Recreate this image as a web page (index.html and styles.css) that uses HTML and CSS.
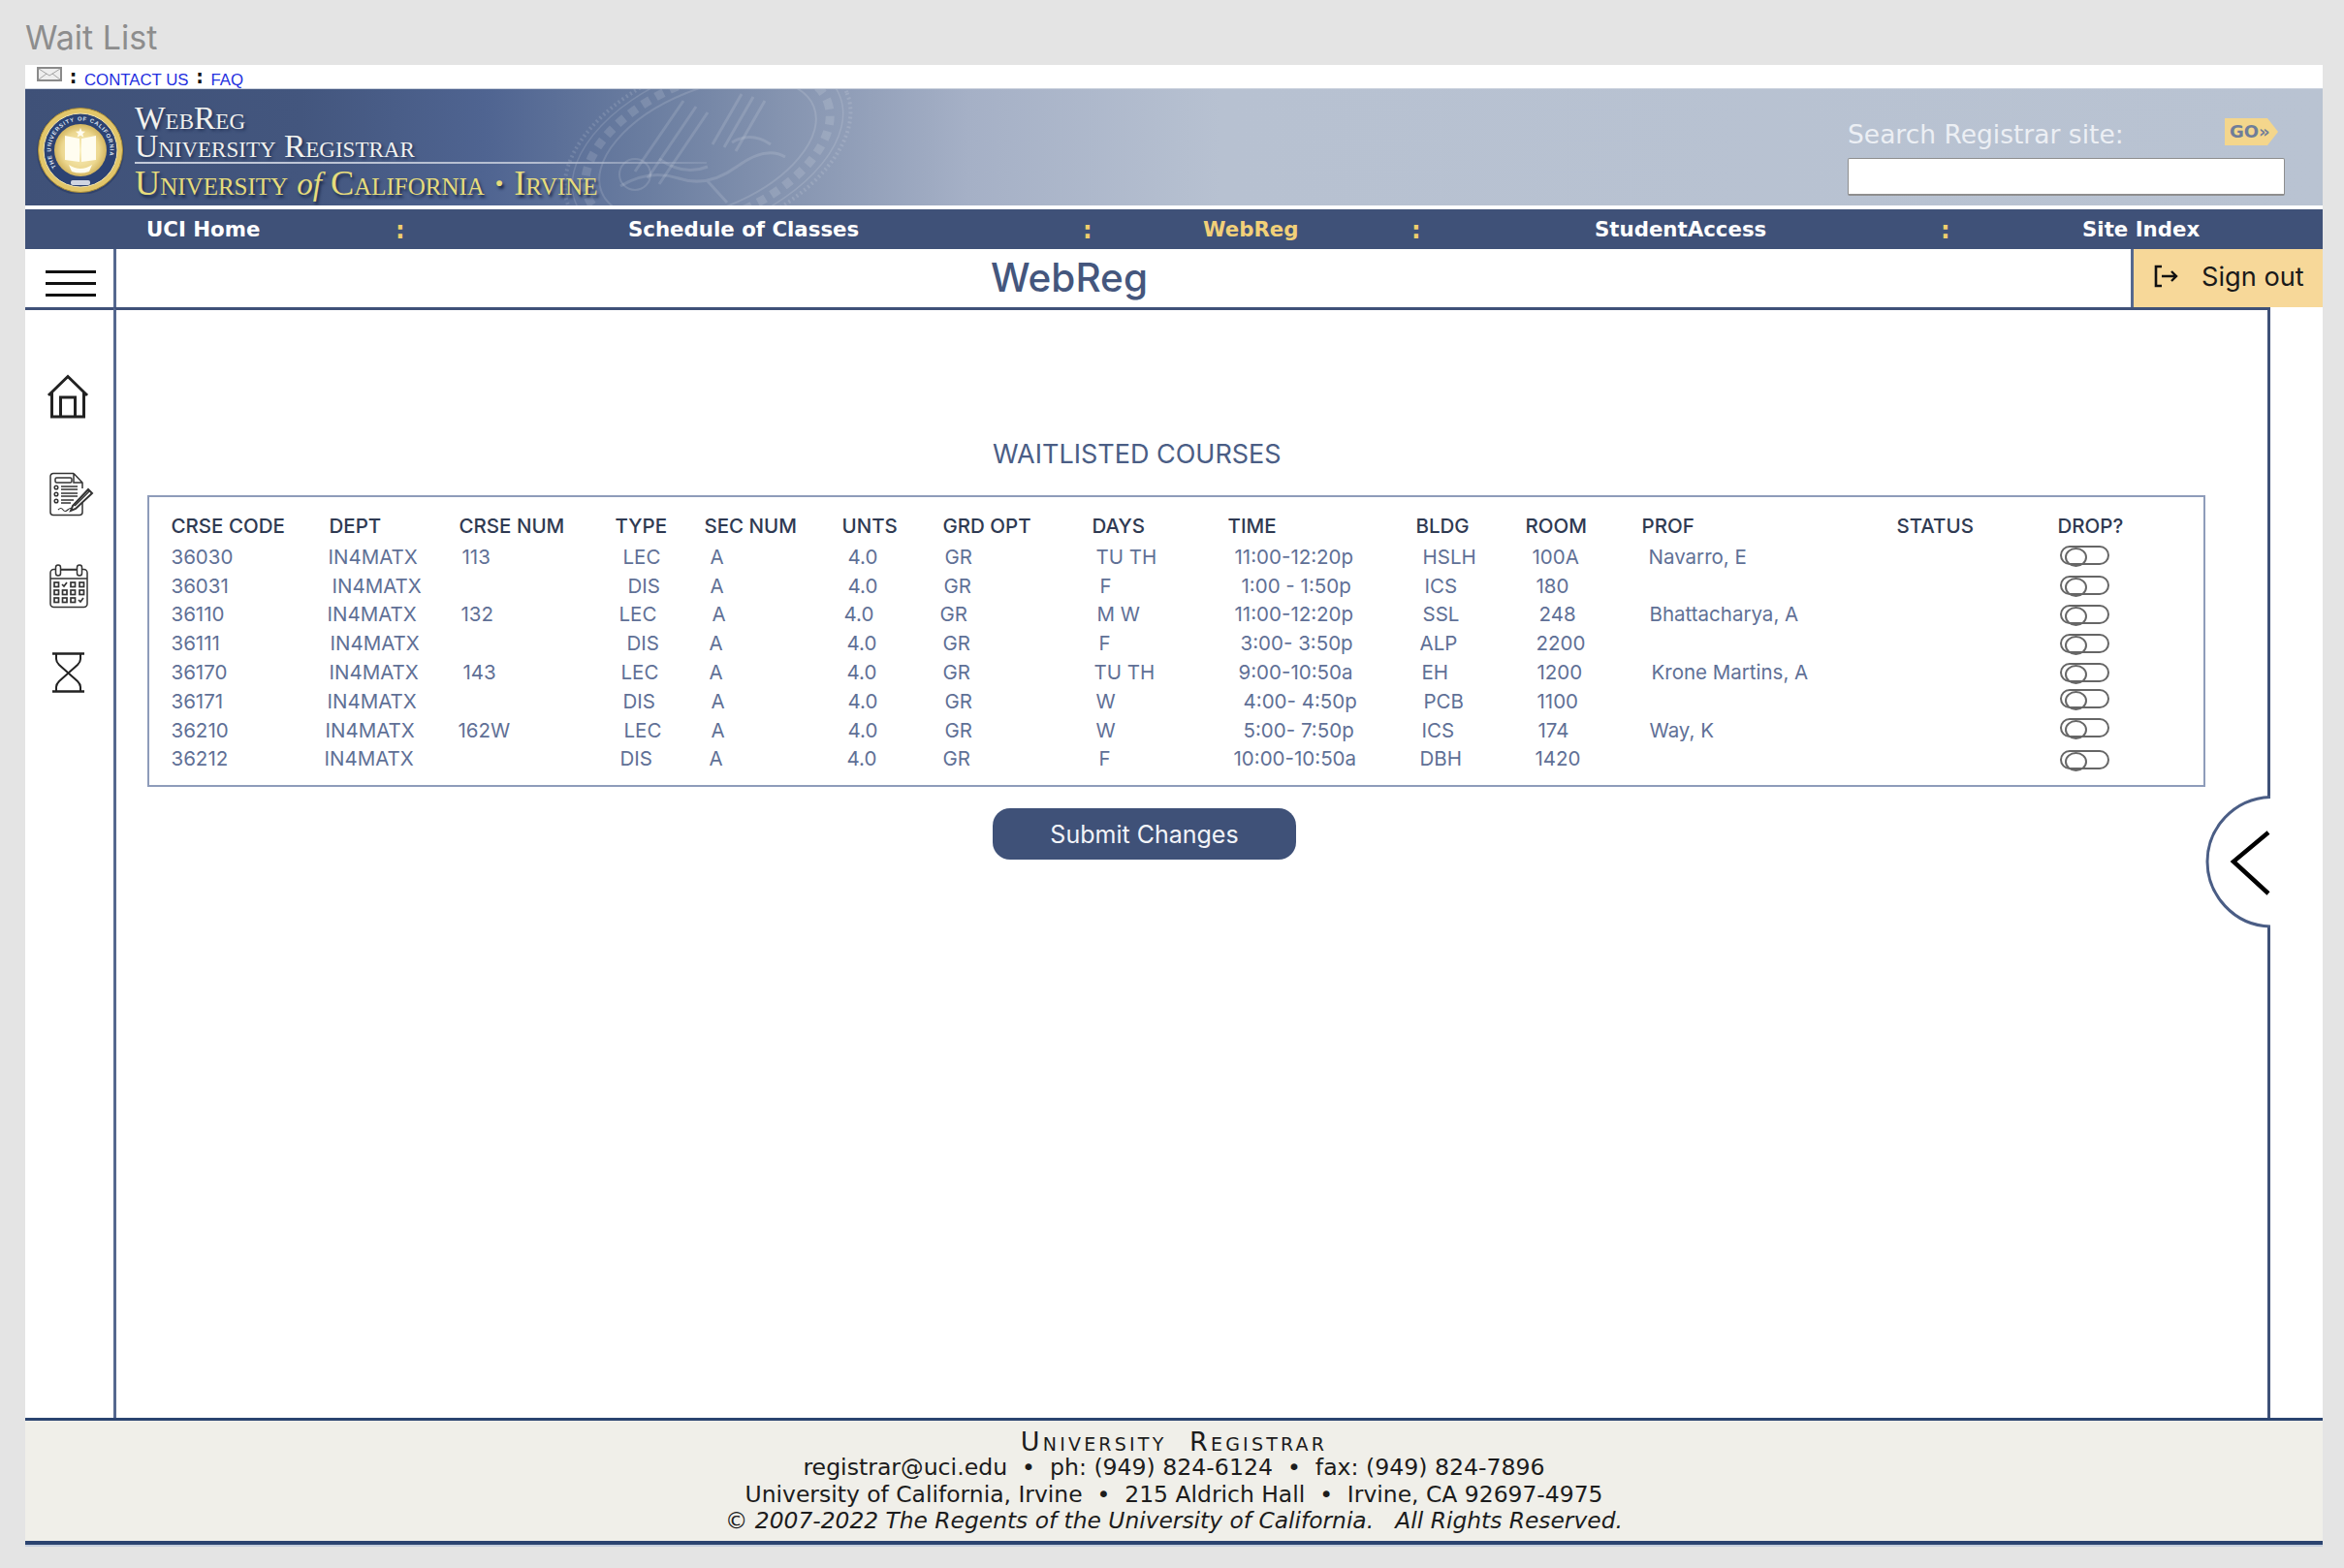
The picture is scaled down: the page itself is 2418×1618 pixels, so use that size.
FILE: index.html
```html
<!DOCTYPE html>
<html lang="en">
<head>
<meta charset="utf-8">
<title>Wait List</title>
<link rel="stylesheet" href="styles.css">
</head>
<body>
<h1 class="page-title">Wait List</h1>
<div class="app">
  <div class="topbar">
    <svg class="mail" viewBox="0 0 26 15"><rect x="1" y="1" width="24" height="13" fill="#eee" stroke="#8a8a8a" stroke-width="2"/><path d="M2 2l11 7 11-7M2 13l8-6M24 13l-8-6" fill="none" stroke="#a5a5a5"/></svg>
    <span class="sep">:</span><a class="toplink" href="#">CONTACT US</a><span class="sep">:</span><a class="toplink" href="#">FAQ</a>
  </div>

  <header class="banner">
    <svg class="watermark" viewBox="0 0 300 120">
      <g fill="none" stroke="#fff" stroke-opacity=".13">
        <g transform="rotate(-22 150 62)">
          <ellipse cx="150" cy="62" rx="155" ry="88" stroke-width="4" stroke-dasharray="2 3"/>
          <ellipse cx="150" cy="62" rx="147" ry="82" stroke-width="1.500"/>
          <ellipse cx="150" cy="62" rx="118" ry="62" stroke-width="2"/>
          <ellipse cx="150" cy="62" rx="133" ry="72" stroke-width="9" stroke-dasharray="9 7"/>
        </g>
        <g stroke-width="3">
          <path d="M75 85L125 12M88 92L138 18M100 98L150 24"/>
          <path d="M185 5l-30 52M197 8l-30 52M209 12l-30 52"/>
          <path d="M60 100q30-18 60-8t60-12 50-10M100 72q25 18 50 8M175 55q20-12 40 2M150 95l20 22"/>
        </g>
        <circle cx="75" cy="88" r="16" stroke-width="2"/>
      </g>
    </svg>
    <svg class="seal" viewBox="0 0 90 90">
      <defs>
        <radialGradient id="gold" cx=".5" cy=".5" r=".55"><stop offset="0" stop-color="#fbf2c6"/><stop offset=".65" stop-color="#ecd78f"/><stop offset="1" stop-color="#c9a94f"/></radialGradient>
        <path id="ringtext" d="M20 62.500A30.500 30.500 0 1 1 70 62.500"/>
        <filter id="soft"><feGaussianBlur stdDeviation=".6"/></filter>
      </defs>
      <circle cx="45" cy="46" r="45" fill="#23345c" opacity=".5"/>
      <circle cx="45" cy="45" r="43.500" fill="#e2c66a" stroke="#a98b37"/>
      <circle cx="45" cy="45" r="38" fill="#2c4273" stroke="#f1e4ae"/>
      <circle cx="45" cy="45" r="27" fill="url(#gold)"/>
      <text class="seal-text"><textPath href="#ringtext">THE UNIVERSITY OF CALIFORNIA</textPath></text>
      <g filter="url(#soft)" fill="#fffdf0">
        <path d="M29 30l15 3v24l-15-2zM61 30l-15 3v24l15-2z"/>
        <path d="M45 22l1.500 3.500 3.500.3-2.700 2.300.9 3.400-3.200-1.800-3.200 1.800.9-3.400-2.700-2.300 3.500-.3z"/>
        <path d="M33 60q12 8 24 0l-3 7q-9 3-18 0z"/>
      </g>
      <rect x="35" y="76" width="20" height="5" rx="2" fill="#cfd5e2"/>
    </svg>
    <div class="wordmark">
      <div class="wm-line">WebReg</div>
      <div class="wm-line">University Registrar</div>
      <div class="wm-rule"></div>
      <div class="wm-uni">University <i>of</i> California <span class="wm-dot">·</span> Irvine</div>
    </div>
    <form class="search">
      <div class="search-head">
        <label class="search-label" for="q">Search Registrar site:</label>
        <span class="go">GO»</span>
      </div>
      <input id="q" class="search-input" type="text">
    </form>
  </header>

  <nav class="nav">
    <a href="#" class="nav-link">UCI Home</a><span class="nav-sep">:</span>
    <a href="#" class="nav-link">Schedule of Classes</a><span class="nav-sep">:</span>
    <a href="#" class="nav-link nav-active">WebReg</a><span class="nav-sep">:</span>
    <a href="#" class="nav-link">StudentAccess</a><span class="nav-sep">:</span>
    <a href="#" class="nav-link">Site Index</a>
  </nav>

  <div class="titlebar">
    <div class="burger"><span></span><span></span><span></span></div>
    <div class="app-title">WebReg</div>
    <a href="#" class="signout">
      <svg class="signout-icon" viewBox="0 0 26 24"><path d="M8 2H2v20h6" fill="none" stroke="#111" stroke-width="2.600"/><path d="M8 12h15M18 7l5 5-5 5" fill="none" stroke="#111" stroke-width="2.400"/></svg>
      <span>Sign out</span>
    </a>
  </div>

  <div class="body">
    <aside class="sidebar">
      <svg class="ic ic-home" viewBox="0 0 44 46" fill="none" stroke="#222" stroke-width="3">
        <path d="M2 22L22 2.500 42 22"/><path d="M5.500 19v25h33V19"/><path d="M14.500 44V24h15v20"/>
      </svg>
      <svg class="ic ic-doc" viewBox="0 0 46 46" fill="none" stroke="#333" stroke-width="1.500">
        <path d="M25 1.500H4a3 3 0 0 0-3 3v37a3 3 0 0 0 3 3h27a3 3 0 0 0 3-3V32"/><path d="M25 1.500L34 11v6M25 1.500V11h9"/>
        <rect x="6" y="6" width="17" height="5" rx="1.500"/>
        <circle cx="7" cy="16" r="1.800"/><circle cx="7" cy="23" r="1.800"/><circle cx="7" cy="30" r="1.800"/>
        <path d="M12 15h17M12 18h17M12 22h17M12 25h17M12 29h13M12 32h10" stroke-width="1.300"/>
        <path d="M9 39q3-3 5 0t5 0 5 0" stroke-width="1.200"/>
        <path d="M24 35l16-17 4 4-17 16-5 2z" stroke-width="2" fill="#fff"/>
        <path d="M26 35l15-15" stroke-width="1.500"/>
      </svg>
      <svg class="ic ic-cal" viewBox="0 0 40 46" fill="none" stroke="#333" stroke-width="1.500">
        <rect x="1" y="5.500" width="38" height="39" rx="3.500"/>
        <path d="M12 6h16M1 15h38" stroke-width="1.500"/>
        <rect x="6.500" y="1" width="5" height="11" rx="2.500" fill="#fff"/><rect x="28.500" y="1" width="5" height="11" rx="2.500" fill="#fff"/>
        <g stroke-width="1.700">
          <rect x="5" y="19" width="4.500" height="4.500"/><path d="M13 21l2 2 3-4"/><rect x="22" y="19" width="4.500" height="4.500"/><rect x="31" y="19" width="4.500" height="4.500"/>
          <rect x="5" y="27" width="4.500" height="4.500"/><rect x="13.500" y="27" width="4.500" height="4.500"/><rect x="22" y="27" width="4.500" height="4.500"/><rect x="31" y="27" width="4.500" height="4.500"/>
          <rect x="5" y="35" width="4.500" height="4.500"/><rect x="13.500" y="35" width="4.500" height="4.500"/><rect x="22" y="35" width="4.500" height="4.500"/><path d="M30 37l2 2 3-4"/>
        </g>
      </svg>
      <svg class="ic ic-hour" viewBox="0 0 33 42" fill="none" stroke="#222" stroke-width="2">
        <path d="M0 1.500h33M0 40.500h33" stroke-width="2.600"/>
        <path d="M4 2v5q0 3 3 6l19 17q3 3 3 6v4"/><path d="M29 2v5q0 3-3 6L7 30q-3 3-3 6v4"/>
      </svg>
    </aside>

    <main class="main">
      <h2 class="section-title">WAITLISTED COURSES</h2>
      <div class="course-box">
        <div class="row head">
          <div>CRSE CODE</div><div>DEPT</div><div>CRSE NUM</div><div>TYPE</div><div>SEC NUM</div><div>UNTS</div><div>GRD OPT</div><div>DAYS</div><div>TIME</div><div>BLDG</div><div>ROOM</div><div>PROF</div><div>STATUS</div><div>DROP?</div>
        </div>
        <div class="row r1"><div>36030</div><div>IN4MATX</div><div>113</div><div>LEC</div><div>A</div><div>4.0</div><div>GR</div><div>TU TH</div><div>11:00-12:20p</div><div>HSLH</div><div>100A</div><div>Navarro, E</div><div></div><label class="toggle"><input type="checkbox"></label></div>
        <div class="row r2"><div>36031</div><div>IN4MATX</div><div></div><div>DIS</div><div>A</div><div>4.0</div><div>GR</div><div>F</div><div>1:00 - 1:50p</div><div>ICS</div><div>180</div><div></div><div></div><label class="toggle"><input type="checkbox"></label></div>
        <div class="row r3"><div>36110</div><div>IN4MATX</div><div>132</div><div>LEC</div><div>A</div><div>4.0</div><div>GR</div><div>M W</div><div>11:00-12:20p</div><div>SSL</div><div>248</div><div>Bhattacharya, A</div><div></div><label class="toggle"><input type="checkbox"></label></div>
        <div class="row r4"><div>36111</div><div>IN4MATX</div><div></div><div>DIS</div><div>A</div><div>4.0</div><div>GR</div><div>F</div><div>3:00- 3:50p</div><div>ALP</div><div>2200</div><div></div><div></div><label class="toggle"><input type="checkbox"></label></div>
        <div class="row r5"><div>36170</div><div>IN4MATX</div><div>143</div><div>LEC</div><div>A</div><div>4.0</div><div>GR</div><div>TU TH</div><div>9:00-10:50a</div><div>EH</div><div>1200</div><div>Krone Martins, A</div><div></div><label class="toggle"><input type="checkbox"></label></div>
        <div class="row r6"><div>36171</div><div>IN4MATX</div><div></div><div>DIS</div><div>A</div><div>4.0</div><div>GR</div><div>W</div><div>4:00- 4:50p</div><div>PCB</div><div>1100</div><div></div><div></div><label class="toggle"><input type="checkbox"></label></div>
        <div class="row r7"><div>36210</div><div>IN4MATX</div><div>162W</div><div>LEC</div><div>A</div><div>4.0</div><div>GR</div><div>W</div><div>5:00- 7:50p</div><div>ICS</div><div>174</div><div>Way, K</div><div></div><label class="toggle"><input type="checkbox"></label></div>
        <div class="row r8"><div>36212</div><div>IN4MATX</div><div></div><div>DIS</div><div>A</div><div>4.0</div><div>GR</div><div>F</div><div>10:00-10:50a</div><div>DBH</div><div>1420</div><div></div><div></div><label class="toggle"><input type="checkbox"></label></div>
      </div>
      <button class="submit" type="button">Submit Changes</button>
      <svg class="notch" viewBox="0 0 68 140">
        <path d="M68 1.500C30 3 3 34 3 68s27 66 65 67" fill="#fff" stroke="#4a5d85" stroke-width="3"/>
        <path d="M66 38L30 68l36 33" fill="none" stroke="#000" stroke-width="4.500"/>
      </svg>
    </main>
    <div class="gutter"></div>
  </div>

  <footer class="footer">
    <div class="foot-head">University &nbsp;Registrar</div>
    <div>registrar@uci.edu &nbsp;•&nbsp; ph: (949) 824-6124 &nbsp;•&nbsp; fax: (949) 824-7896</div>
    <div class="foot-addr">University of California, Irvine &nbsp;•&nbsp; 215 Aldrich Hall &nbsp;•&nbsp; Irvine, CA 92697-4975</div>
    <div class="foot-copy">© 2007-2022 The Regents of the University of California. &nbsp; All Rights Reserved.</div>
  </footer>
</div>
</body>
</html>
```

FILE: styles.css
```css
* { box-sizing: border-box; }
html, body { margin: 0; padding: 0; }
body {
  width: 2418px;
  height: 1618px;
  overflow: hidden;
  background: #e4e4e4;
  font-family: Inter, "Liberation Sans", sans-serif;
}
.page-title {
  margin: 0;
  height: 67px;
  padding: 18px 0 0 26px;
  font-size: 34px;
  line-height: 42px;
  font-weight: 400;
  color: #8d8d8d;
}
.app {
  width: 2370px;
  margin-left: 26px;
  background: #fff;
}

/* top strip */
.topbar {
  height: 25px;
  display: flex;
  align-items: center;
  padding-left: 12px;
  border-bottom: 1px solid #c9d0dc;
}
.mail { width: 26px; height: 15px; margin-top: -6px; }
.sep {
  width: 23px;
  text-align: center;
  font: bold 19px "DejaVu Sans", sans-serif;
  color: #111;
}
.toplink {
  font: 16.800px "Liberation Sans", sans-serif;
  color: #1f2fe0;
  text-decoration: none;
  padding-top: 7px;
}

/* banner */
.banner {
  position: relative;
  height: 120px;
  display: flex;
  overflow: hidden;
  background: linear-gradient(90deg, #3f5178 0%, #43567e 12%, #4f6491 20%, #6a7da0 27%, #8594b0 33%, #a5b0c6 41%, #b7c1d1 52%, #b9c3d2 100%);
}
.watermark { position: absolute; left: 554px; top: 0; width: 300px; height: 120px; overflow: visible; }
.seal { width: 90px; height: 90px; margin: 18px 0 0 12px; flex: none; position: relative; }
.seal-text { font: bold 5.800px "Liberation Sans", sans-serif; fill: #dfe6f2; letter-spacing: .9px; }
.wordmark { margin: 15px 0 0 11px; font-family: "Liberation Serif", serif; position: relative; width: 590px; }
.wm-line {
  font-size: 33.500px;
  line-height: 29px;
  font-variant: small-caps;
  color: #f1f1ee;
  text-shadow: 2px 2px 3px #24345a;
}
.wm-rule {
  height: 2px;
  margin: 2px 0;
  background: linear-gradient(90deg, #c3cad9, #b4bdd0 70%, rgba(180,190,210,.2));
}
.wm-uni {
  font-size: 36.300px;
  line-height: 36px;
  font-variant: small-caps;
  color: #e6dc7c;
  text-shadow: 2px 3px 3px #1e2c4e;
  white-space: nowrap;
}
.wm-uni i { font-variant: normal; font-size: 33px; }
.wm-dot { font-weight: bold; }
.search { width: 451px; margin: 30px 39px 0 auto; position: relative; }
.search-head { display: flex; justify-content: space-between; align-items: center; height: 28px; padding-right: 7px; margin-bottom: 13px; }
.search-label { font: 26.500px "DejaVu Sans", sans-serif; color: #eceff4; padding-top: 4px; }
.go {
  width: 55px;
  height: 28px;
  padding-left: 5px;
  background: #f4d68c;
  clip-path: polygon(0 0, 80% 0, 100% 50%, 80% 100%, 0 100%);
  font: bold 18px/28px "DejaVu Sans", sans-serif;
  color: #6f7d99;
}
.search-input {
  display: block;
  width: 451px;
  height: 39px;
  border: 1px solid #8e8e8e;
  border-bottom-width: 2px;
  background: #fff;
  border-radius: 2px;
}

/* nav */
.nav {
  margin-top: 4px;
  height: 41px;
  background: #3f5178;
  display: grid;
  grid-template-columns: 257px 240px 469px 124px 215px 189px 357px 146px 1fr;
  padding-left: 125px;
  align-items: center;
}
.nav-link {
  font: bold 21.300px "DejaVu Sans", sans-serif;
  color: #fff;
  text-decoration: none;
  white-space: nowrap;
}
.nav-active { color: #f2d078; }
.nav-sep { font: bold 24px "DejaVu Sans", sans-serif; color: #f0cf6c; padding-top: 2px; }

/* title row */
.titlebar {
  display: flex;
  height: 60px;
}
.burger {
  width: 94px;
  border-right: 3px solid #55688f;
  padding: 22px 18px 0 21px;
  display: flex;
  flex-direction: column;
  gap: 9px;
}
.burger span { display: block; height: 3px; background: #111; }
.app-title {
  flex: 1;
  padding-right: 112px;
  text-align: center;
  font-size: 40.500px;
  line-height: 60px;
  font-weight: 500;
  color: #44567d;
}
.signout {
  width: 198px;
  border-left: 3px solid #55688f;
  background: #f7d899;
  display: flex;
  align-items: center;
  gap: 23px;
  padding: 0 0 4px 21px;
  font-size: 27.200px;
  color: #1a1a1a;
  text-decoration: none;
}
.signout-icon { width: 26px; height: 24px; flex: none; }

/* body */
.body { display: flex; height: 1146px; }
.sidebar {
  width: 91px;
  border-top: 3px solid #3f5178;
  display: flex;
  flex-direction: column;
  align-items: flex-start;
  padding-top: 66px;
}
.ic { display: block; }
.ic-home { width: 44px; height: 46px; margin-left: 22px; }
.ic-doc { width: 46px; height: 46px; margin: 55px 0 0 25px; }
.ic-cal { width: 40px; height: 46px; margin: 49px 0 0 25px; }
.ic-hour { width: 33px; height: 42px; margin: 45px 0 0 28px; }
.main {
  position: relative;
  width: 2225px;
  border-top: 3px solid #3f5178;
  border-left: 3px solid #55688f;
  border-right: 3px solid #3f5178;
  padding-top: 132px;
}
.gutter { flex: 1; }
.section-title {
  margin: 0 0 25px 904px;
  height: 34px;
  font-size: 27px;
  line-height: 34px;
  font-weight: 400;
  color: #4a5d85;
  white-space: nowrap;
}
.course-box {
  width: 2123px;
  height: 301px;
  margin-left: 32px;
  border: 2px solid #8e9cba;
  padding: 14.500px 0 0 22.500px;
}
.row {
  display: grid;
  height: 29.800px;
  align-items: center;
  font-size: 20.500px;
  color: #5f7096;
  white-space: nowrap;
}
.head {
  height: 30px;
  margin-bottom: 2px;
  font-weight: 500;
  color: #2f3a52;
  grid-template-columns: 163px 134px 161px 92px 142px 104px 154px 140px 194px 113px 120px 263px 166px 1fr;
}
.r1 { grid-template-columns: 162px 138px 166px 90px 142px 100px 156px 143px 194px 113px 120px 256px 168px 1fr; }
.r2 { grid-template-columns: 166px 134px 171px 85px 142px 99px 161px 146px 189px 115px 116px 256px 168px 1fr; }
.r3 { grid-template-columns: 161px 138px 163px 96px 136px 99px 162px 142px 194px 120px 114px 255px 168px 1fr; }
.r4 { grid-template-columns: 164px 136px 170px 85px 142px 99px 161px 146px 185px 120px 117px 255px 168px 1fr; }
.r5 { grid-template-columns: 163px 138px 163px 91px 142px 99px 156px 149px 189px 119px 118px 253px 168px 1fr; }
.r6 { grid-template-columns: 161px 139px 166px 91px 141px 100px 156px 152px 186px 117px 116px 255px 168px 1fr; }
.r7 { grid-template-columns: 159px 137px 171px 90px 141px 100px 156px 152px 184px 120px 115px 255px 168px 1fr; }
.r8 { grid-template-columns: 158px 142px 163px 92px 142px 99px 161px 139px 192px 119px 118px 255px 168px 1fr; }
.toggle {
  position: relative;
  display: block;
  width: 51px;
  height: 20px;
  border: 2px solid #666;
  border-radius: 10px;
  background: #fff;
}
.toggle input { display: none; }
.toggle::after {
  content: "";
  position: absolute;
  left: 3px;
  top: 0;
  width: 19px;
  height: 16px;
  border: 2px solid #666;
  border-radius: 50%;
}
.r1 .toggle { margin-top: -2px; }
.r6 .toggle { margin-top: -4px; }
.r7 .toggle { margin-top: -4px; }
.r8 .toggle { margin-top: 2px; }
.submit {
  display: block;
  width: 313px;
  height: 53px;
  margin: 22px 0 0 904px;
  border: 0;
  border-radius: 18px;
  background: #3f5178;
  color: #f2f4f8;
  font: 400 25px Inter, sans-serif;
}
.notch {
  position: absolute;
  right: -3px;
  top: 501px;
  width: 68px;
  height: 140px;
}

/* footer */
.footer {
  height: 131px;
  border-top: 3px solid #2b4470;
  border-bottom: 4px solid #2b4470;
  background: #f0efe9;
  padding-top: 8px;
  text-align: center;
  font: 23.600px/27.400px "DejaVu Sans", sans-serif;
  color: #1c1c1c;
  box-shadow: 0 2px 0 #c5cedd;
}
.foot-head { font-variant: small-caps; letter-spacing: 3.200px; font-size: 27px; }
.foot-addr { font-size: 23.450px; }
.foot-copy { font-style: italic; font-size: 23.350px; }
```
